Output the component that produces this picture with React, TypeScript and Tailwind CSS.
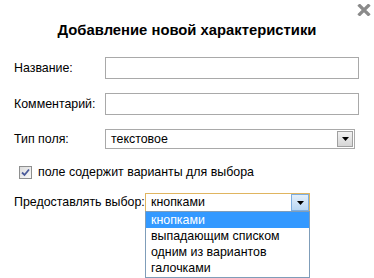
import React from "react";

function Arrow() {
  return (
    <svg width="7" height="4" viewBox="0 0 7 4"><path d="M0 0h7L3.5 4z" fill="#000" /></svg>
  );
}

export default function App() {
  return (
    <div className="relative w-[374px] h-[278px] bg-white overflow-hidden text-[12.4px] text-black whitespace-nowrap" style={{ fontFamily: '"Liberation Sans", Arial, sans-serif' }}>
      <div className="absolute left-[357px] top-[4px] w-[14px] h-[12px]">
        <svg width="14" height="12" viewBox="0 0 14 12">
          <path d="M1.5 0.5L12.5 11.5M12.5 0.5L1.5 11.5" stroke="#8a8a8a" strokeWidth="3.2" />
        </svg>
      </div>
      <div className="pt-[20px] text-center font-bold text-[14.8px] leading-[20px]">Добавление новой характеристики</div>
      <div className="flex flex-col pl-[14px] mt-[17px]">
        <div className="flex items-center h-[22px]">
          <span className="w-[91px]">Название:</span>
          <div className="w-[254px] h-[22px] border border-[#a9a9a9]" />
        </div>
        <div className="flex items-center h-[22px] mt-[14px]">
          <span className="w-[91px]">Комментарий:</span>
          <div className="w-[254px] h-[22px] border border-[#a9a9a9]" />
        </div>
        <div className="flex items-center h-[20px] mt-[14px]">
          <span className="w-[91px]">Тип поля:</span>
          <div className="w-[250px] h-[20px] border border-[#a9a9a9] flex items-center">
            <span className="flex-1 pl-[5px]">текстовое</span>
            <div className="w-[16px] h-[16px] mr-[1px] border border-[#a0a0a0] bg-gradient-to-b from-[#f2f2f2] to-[#d6d6d6] flex items-center justify-center"><Arrow /></div>
          </div>
        </div>
        <div className="flex items-center h-[16px] mt-[15px] pl-[5px]">
          <div className="w-[13px] h-[13px] border border-[#8e8f8f] bg-gradient-to-br from-[#dcdcdc] to-[#fafafa] flex items-center justify-center">
            <svg width="9" height="9" viewBox="0 0 9 9"><path d="M1 4.5L3.5 7L8 1.5" stroke="#4a5a9a" strokeWidth="1.8" fill="none" /></svg>
          </div>
          <span className="ml-[6px]">поле содержит варианты для выбора</span>
        </div>
        <div className="flex items-center h-[19px] mt-[13px]">
          <span className="w-[131px]">Предоставлять выбор:</span>
          <div className="relative w-[165px] h-[19px] border border-[#e0b560] flex items-center">
            <span className="flex-1 pl-[5px]">кнопками</span>
            <div className="w-[18px] h-[17px] border border-[#7eaee0] bg-gradient-to-b from-[#e3effb] to-[#b9d7f3] flex items-center justify-center"><Arrow /></div>
            <div className="absolute left-[-1px] top-[17px] w-[165px] h-[67px] bg-white border border-[#7f9db9] flex flex-col">
              <div className="h-[16px] leading-[16px] pl-[5px] bg-[#3399ff] text-white">кнопками</div>
              <div className="h-[16px] leading-[16px] pl-[5px]">выпадающим списком</div>
              <div className="h-[16px] leading-[16px] pl-[5px]">одним из вариантов</div>
              <div className="h-[16px] leading-[16px] pl-[5px]">галочками</div>
            </div>
          </div>
        </div>
      </div>
    </div>
  );
}
